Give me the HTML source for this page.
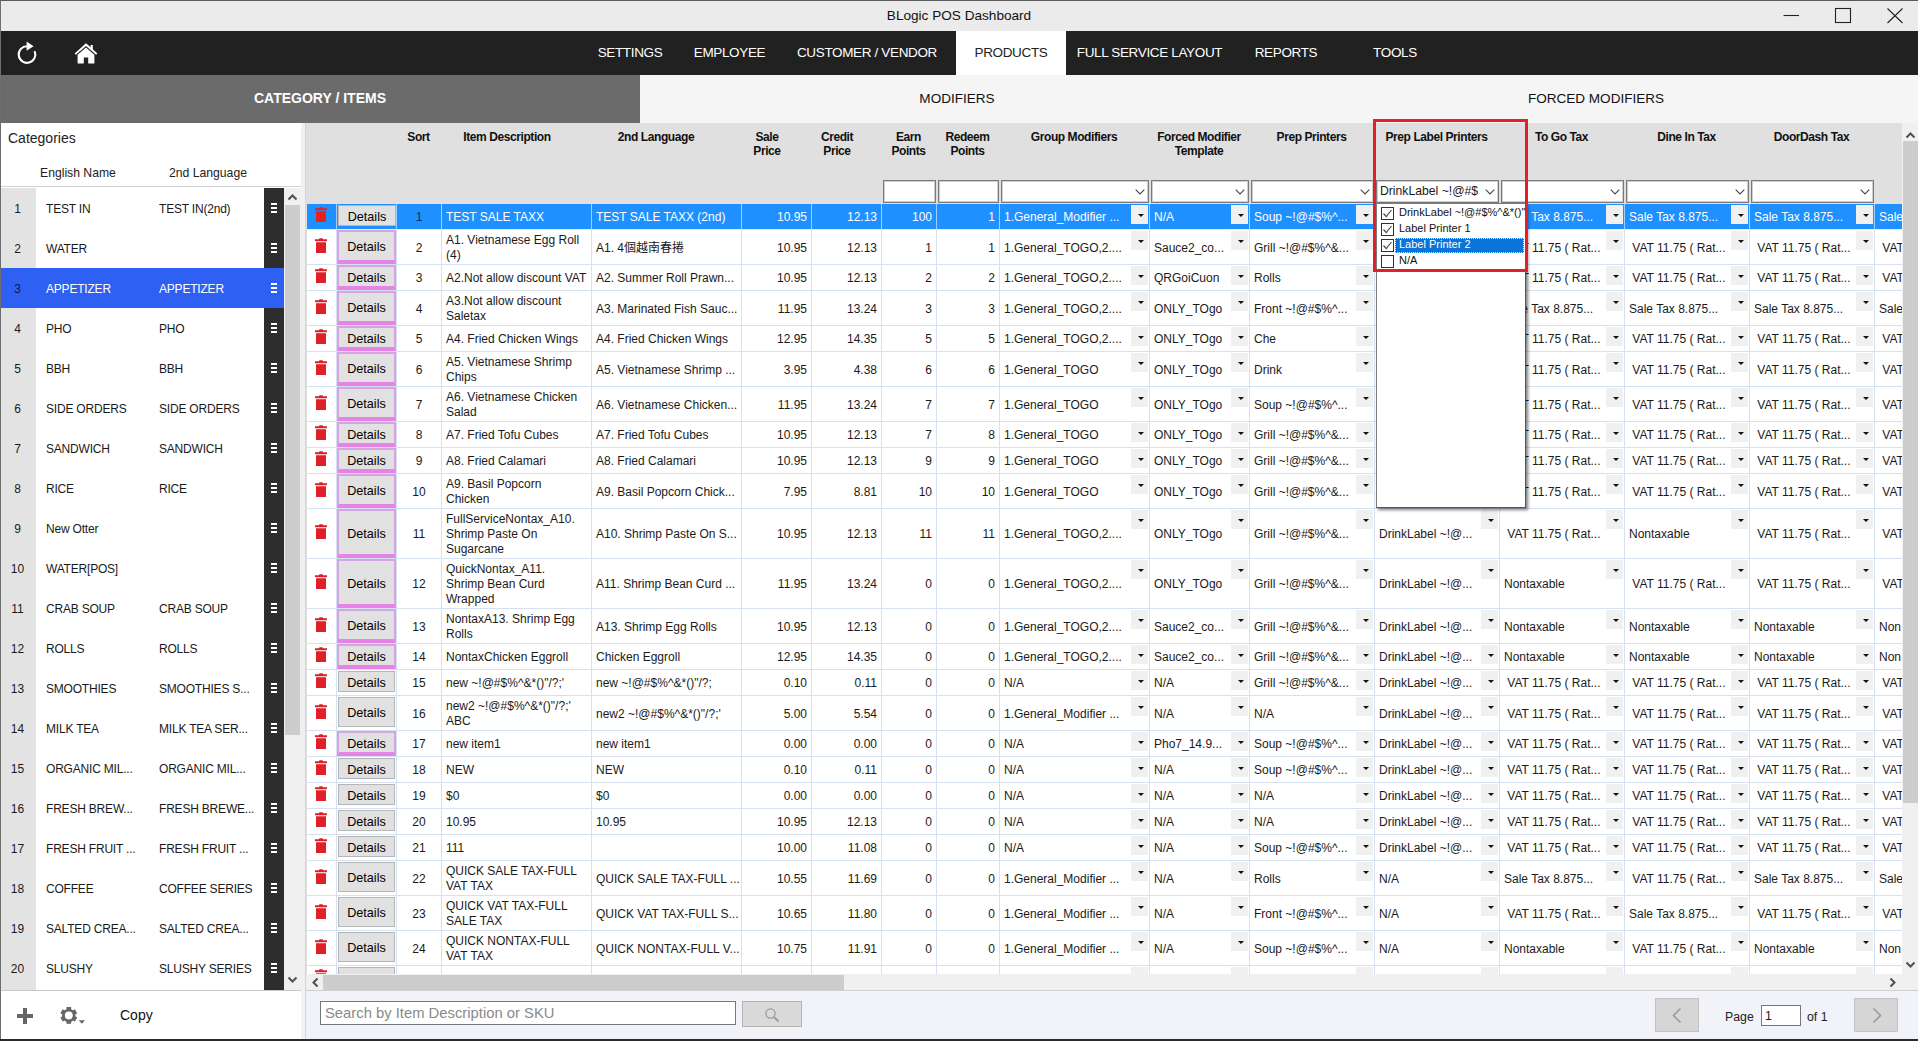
<!DOCTYPE html><html><head><meta charset="utf-8"><title>BLogic POS Dashboard</title><style>
*{box-sizing:border-box;margin:0;padding:0}
html,body{width:1918px;height:1041px;overflow:hidden;background:#f0f0f0;font-family:"Liberation Sans","Noto Sans CJK TC",sans-serif;color:#1a1a1a}
.abs{position:absolute}
#win{position:absolute;left:0;top:0;width:1918px;height:1041px;overflow:hidden;background:#f1f3f9}
#title{left:0;top:0;width:1918px;height:31px;background:#ebebeb;border-top:1px solid #5a5a5a}
#title .t{left:0;width:1918px;top:7px;text-align:center;font-size:13.6px;color:#111}
#nav{left:0;top:31px;width:1918px;height:44px;background:#212121}
#nav .n{top:0;height:44px;line-height:43px;color:#fff;font-size:13.5px;letter-spacing:-0.35px;text-align:center;white-space:nowrap}
#nav .sel{background:#fff;color:#222}
#sub{left:0;top:75px;width:1918px;height:48px;background:#f5f5f5}
#sub .s{top:0;height:48px;line-height:47.5px;text-align:center;font-size:13.55px;color:#111;white-space:nowrap}
#sub .act{background:#6b6b6b;color:#fff;font-weight:bold;font-size:14px}
#left{left:0;top:123px;width:301px;height:916px;background:#fff}
#lsep{left:301px;top:123px;width:4px;height:867px;background:#f0f0f0}
.crow{left:0;width:284px;height:40px;font-size:12px;line-height:42px;white-space:nowrap;color:#1a1a1a}
.crow .num{left:0;top:0;width:36px;height:40px;background:#e3e3e3;text-align:center;padding-right:1px}
.crow .a{left:46px;top:0;letter-spacing:-0.2px}
.crow .b{left:159px;top:0;letter-spacing:-0.2px}
.crow .h{left:264px;top:0;width:20px;height:40px;background:#2d2d2d}
.crow .h i{position:absolute;left:7px;width:6px;height:2px;background:#fff}
.crow.sel{background:#2e60f4;color:#fff}
.crow.sel .num{background:#2e60f4;color:#0b1a55}
.crow.sel .h{background:#2e60f4}
#grid{left:305px;top:123px;width:1598px;height:851px;background:#e0e0e0;overflow:hidden}
.hd{position:absolute;top:7px;text-align:center;font-weight:bold;font-size:12px;line-height:14px;letter-spacing:-0.42px;color:#111;white-space:nowrap}
.fi{position:absolute;top:57px;height:23px;background:#fff;border:1px solid #7a7a7a;box-shadow:0 0 0 1px #cfcfcf inset;font-size:12.2px;line-height:21px;padding-left:3px;white-space:nowrap;overflow:hidden}
.fi svg{position:absolute;right:3px;top:8px}
.row{position:absolute;left:2px;width:1700px;background:#fff;font-size:12px;white-space:nowrap}
.c{position:absolute;top:0;height:100%;border-right:1px solid #d5e0f0;border-bottom:1px solid #d5e0f0;padding:2px 4px 0 4px;overflow:hidden;display:flex;align-items:center;line-height:14.8px}
.c.r{justify-content:flex-end}
.c.m{justify-content:center}
.row.sel{background:#1e90ff;color:#fff}
.row.sel .c{border-right-color:#9fd0ff;border-bottom-color:#e3eefb}
.row.sel .c.m{color:#0a2c66}
.dd{position:absolute;top:1px;right:1px;width:17px;height:19px;background:#f0f0f0}
.dd:after{content:"";position:absolute;left:6.5px;top:8.5px;border-left:3px solid transparent;border-right:3px solid transparent;border-top:3.5px solid #111}
.btn{position:absolute;background:#e1e1e1;border:1px solid #b6b6b6;font-size:12.6px;display:flex;align-items:center;justify-content:center;color:#000;padding-top:3px}
.btn.p{border:2px solid #d6a4e2;border-bottom:4px solid #e683e6}
.btn.p1{border:1px solid #d88ee0}
.tr{position:absolute;left:8px}
</style></head><body><div id="win">
<div id="title" class="abs"><div class="t abs">BLogic POS Dashboard</div>
<svg class="abs" style="left:1780px;top:0" width="130" height="31" viewBox="0 0 130 31"><g stroke="#222" stroke-width="1.1" fill="none"><path d="M3.5 14.5H19"/><rect x="55.5" y="7.5" width="15" height="14"/><path d="M107.5 7.5L122.5 22M122.5 7.5L107.5 22"/></g></svg>
</div>
<div id="nav" class="abs">
<svg class="abs" style="left:14px;top:8px" width="28" height="28" viewBox="0 0 28 28"><path d="M20.6 12.2A8.3 8.3 0 1 1 13.2 7.2" fill="none" stroke="#fff" stroke-width="2.1"/><path d="M12.6 2.6L19.6 7.2L12.6 11.8Z" fill="#fff"/></svg>
<svg class="abs" style="left:72px;top:9px" width="28" height="26" viewBox="0 0 28 26"><path d="M14 3.2L2.6 13.4L3.9 14.8L14 5.9L24.1 14.8L25.4 13.4L20.8 9.3V5H18.6V7.3Z" fill="#fff"/><path d="M14 7.4L5.6 14.8V23.4H11.8V17.4H16.2V23.4H22.4V14.8Z" fill="#fff"/></svg>
<div class="n abs" style="left:578px;width:104px">SETTINGS</div>
<div class="n abs" style="left:674px;width:111px">EMPLOYEE</div>
<div class="n abs" style="left:777px;width:180px">CUSTOMER / VENDOR</div>
<div class="n abs sel" style="left:956px;width:110px">PRODUCTS</div>
<div class="n abs" style="left:1057px;width:185px">FULL SERVICE LAYOUT</div>
<div class="n abs" style="left:1236px;width:100px">REPORTS</div>
<div class="n abs" style="left:1353px;width:84px">TOOLS</div>
</div>
<div id="sub" class="abs">
<div class="s abs act" style="left:0;width:640px">CATEGORY / ITEMS</div>
<div class="s abs" style="left:857px;width:200px">MODIFIERS</div>
<div class="s abs" style="left:1496px;width:200px">FORCED MODIFIERS</div>
</div>
<div id="left" class="abs">
<div class="abs" style="left:8px;top:7px;font-size:14px;color:#222">Categories</div>
<div class="abs" style="left:40px;top:43px;font-size:12.2px;color:#222">English Name</div>
<div class="abs" style="left:169px;top:43px;font-size:12.2px;color:#222">2nd Language</div>
<div class="abs" style="left:0;top:63px;width:301px;height:1px;background:#d0d0d0"></div>
<div class="abs" style="left:0;top:65px;width:36px;height:802px;background:#e3e3e3"></div><div class="abs" style="left:264px;top:65px;width:20px;height:802px;background:#2d2d2d"></div>
<div class="crow abs" style="top:65px"><div class="num abs">1</div><div class="a abs">TEST IN</div><div class="b abs">TEST IN(2nd)</div><div class="h abs"><i style="top:15px"></i><i style="top:19px"></i><i style="top:23px"></i></div></div>
<div class="crow abs" style="top:105px"><div class="num abs">2</div><div class="a abs">WATER</div><div class="b abs"></div><div class="h abs"><i style="top:15px"></i><i style="top:19px"></i><i style="top:23px"></i></div></div>
<div class="crow abs sel" style="top:145px"><div class="num abs">3</div><div class="a abs">APPETIZER</div><div class="b abs">APPETIZER</div><div class="h abs"><i style="top:15px"></i><i style="top:19px"></i><i style="top:23px"></i></div></div>
<div class="crow abs" style="top:185px"><div class="num abs">4</div><div class="a abs">PHO</div><div class="b abs">PHO</div><div class="h abs"><i style="top:15px"></i><i style="top:19px"></i><i style="top:23px"></i></div></div>
<div class="crow abs" style="top:225px"><div class="num abs">5</div><div class="a abs">BBH</div><div class="b abs">BBH</div><div class="h abs"><i style="top:15px"></i><i style="top:19px"></i><i style="top:23px"></i></div></div>
<div class="crow abs" style="top:265px"><div class="num abs">6</div><div class="a abs">SIDE ORDERS</div><div class="b abs">SIDE ORDERS</div><div class="h abs"><i style="top:15px"></i><i style="top:19px"></i><i style="top:23px"></i></div></div>
<div class="crow abs" style="top:305px"><div class="num abs">7</div><div class="a abs">SANDWICH</div><div class="b abs">SANDWICH</div><div class="h abs"><i style="top:15px"></i><i style="top:19px"></i><i style="top:23px"></i></div></div>
<div class="crow abs" style="top:345px"><div class="num abs">8</div><div class="a abs">RICE</div><div class="b abs">RICE</div><div class="h abs"><i style="top:15px"></i><i style="top:19px"></i><i style="top:23px"></i></div></div>
<div class="crow abs" style="top:385px"><div class="num abs">9</div><div class="a abs">New Otter</div><div class="b abs"></div><div class="h abs"><i style="top:15px"></i><i style="top:19px"></i><i style="top:23px"></i></div></div>
<div class="crow abs" style="top:425px"><div class="num abs">10</div><div class="a abs">WATER[POS]</div><div class="b abs"></div><div class="h abs"><i style="top:15px"></i><i style="top:19px"></i><i style="top:23px"></i></div></div>
<div class="crow abs" style="top:465px"><div class="num abs">11</div><div class="a abs">CRAB SOUP</div><div class="b abs">CRAB SOUP</div><div class="h abs"><i style="top:15px"></i><i style="top:19px"></i><i style="top:23px"></i></div></div>
<div class="crow abs" style="top:505px"><div class="num abs">12</div><div class="a abs">ROLLS</div><div class="b abs">ROLLS</div><div class="h abs"><i style="top:15px"></i><i style="top:19px"></i><i style="top:23px"></i></div></div>
<div class="crow abs" style="top:545px"><div class="num abs">13</div><div class="a abs">SMOOTHIES</div><div class="b abs">SMOOTHIES S...</div><div class="h abs"><i style="top:15px"></i><i style="top:19px"></i><i style="top:23px"></i></div></div>
<div class="crow abs" style="top:585px"><div class="num abs">14</div><div class="a abs">MILK TEA</div><div class="b abs">MILK TEA SER...</div><div class="h abs"><i style="top:15px"></i><i style="top:19px"></i><i style="top:23px"></i></div></div>
<div class="crow abs" style="top:625px"><div class="num abs">15</div><div class="a abs">ORGANIC MIL...</div><div class="b abs">ORGANIC MIL...</div><div class="h abs"><i style="top:15px"></i><i style="top:19px"></i><i style="top:23px"></i></div></div>
<div class="crow abs" style="top:665px"><div class="num abs">16</div><div class="a abs">FRESH BREW...</div><div class="b abs">FRESH BREWE...</div><div class="h abs"><i style="top:15px"></i><i style="top:19px"></i><i style="top:23px"></i></div></div>
<div class="crow abs" style="top:705px"><div class="num abs">17</div><div class="a abs">FRESH FRUIT ...</div><div class="b abs">FRESH FRUIT ...</div><div class="h abs"><i style="top:15px"></i><i style="top:19px"></i><i style="top:23px"></i></div></div>
<div class="crow abs" style="top:745px"><div class="num abs">18</div><div class="a abs">COFFEE</div><div class="b abs">COFFEE SERIES</div><div class="h abs"><i style="top:15px"></i><i style="top:19px"></i><i style="top:23px"></i></div></div>
<div class="crow abs" style="top:785px"><div class="num abs">19</div><div class="a abs">SALTED CREA...</div><div class="b abs">SALTED CREA...</div><div class="h abs"><i style="top:15px"></i><i style="top:19px"></i><i style="top:23px"></i></div></div>
<div class="crow abs" style="top:825px"><div class="num abs">20</div><div class="a abs">SLUSHY</div><div class="b abs">SLUSHY SERIES</div><div class="h abs"><i style="top:15px"></i><i style="top:19px"></i><i style="top:23px"></i></div></div>
<div class="abs" style="left:284px;top:65px;width:17px;height:802px;background:#f0f0f0"><svg class="abs" style="left:3px;top:5px" width="11" height="8" viewBox="0 0 11 8"><path d="M1.5 6.5L5.5 2.5L9.5 6.5" fill="none" stroke="#505050" stroke-width="2"/></svg><div class="abs" style="left:1px;top:17px;width:15px;height:530px;background:#cdcdcd"></div><svg class="abs" style="left:3px;top:788px" width="11" height="8" viewBox="0 0 11 8"><path d="M1.5 1.5L5.5 5.5L9.5 1.5" fill="none" stroke="#505050" stroke-width="2"/></svg></div>
<div class="abs" style="left:0;top:867px;width:301px;height:1px;background:#c8c8c8"></div>
<svg class="abs" style="left:16px;top:884px" width="18" height="18" viewBox="0 0 18 18"><path d="M9 1V17M1 9H17" stroke="#666" stroke-width="4" fill="none"/></svg>
<svg class="abs" style="left:58px;top:882px" width="28" height="22" viewBox="0 0 28 22"><g transform="translate(10.8 10.4)"><g fill="#666"><rect x="-2.3" y="-8.4" width="4.6" height="4" transform="rotate(0)"/><rect x="-2.3" y="-8.4" width="4.6" height="4" transform="rotate(60)"/><rect x="-2.3" y="-8.4" width="4.6" height="4" transform="rotate(120)"/><rect x="-2.3" y="-8.4" width="4.6" height="4" transform="rotate(180)"/><rect x="-2.3" y="-8.4" width="4.6" height="4" transform="rotate(240)"/><rect x="-2.3" y="-8.4" width="4.6" height="4" transform="rotate(300)"/></g><circle r="5.35" fill="none" stroke="#666" stroke-width="2.7"/></g><path d="M20.8 15.2H27L23.9 18.8Z" fill="#666"/></svg>
<div class="abs" style="left:120px;top:884px;font-size:14px;color:#111">Copy</div>
</div>
<div id="lsep" class="abs"></div>
<div class="abs" style="left:0;top:0;width:1px;height:1041px;background:#6e6e6e"></div>
<div id="grid" class="abs">
<div class="hd" style="left:91px;width:45px">Sort</div>
<div class="hd" style="left:127px;width:150px">Item Description</div>
<div class="hd" style="left:276px;width:150px">2nd Language</div>
<div class="hd" style="left:427px;width:70px">Sale<br>Price</div>
<div class="hd" style="left:497px;width:70px">Credit<br>Price</div>
<div class="hd" style="left:576px;width:55px">Earn<br>Points</div>
<div class="hd" style="left:631px;width:63px">Redeem<br>Points</div>
<div class="hd" style="left:694px;width:150px">Group Modifiers</div>
<div class="hd" style="left:844px;width:100px">Forced Modifier<br>Template</div>
<div class="hd" style="left:944px;width:125px">Prep Printers</div>
<div class="hd" style="left:1069px;width:125px">Prep Label Printers</div>
<div class="hd" style="left:1194px;width:125px">To Go Tax</div>
<div class="hd" style="left:1319px;width:125px">Dine In Tax</div>
<div class="hd" style="left:1444px;width:125px">DoorDash Tax</div>
<div class="fi" style="left:578px;width:53px"></div>
<div class="fi" style="left:633px;width:61px"></div>
<div class="fi" style="left:696px;width:148px"><svg width="10" height="6" viewBox="0 0 10 6"><path d="M0.7 0.7L5 5L9.3 0.7" fill="none" stroke="#444" stroke-width="1.1"/></svg></div>
<div class="fi" style="left:846px;width:98px"><svg width="10" height="6" viewBox="0 0 10 6"><path d="M0.7 0.7L5 5L9.3 0.7" fill="none" stroke="#444" stroke-width="1.1"/></svg></div>
<div class="fi" style="left:946px;width:123px"><svg width="10" height="6" viewBox="0 0 10 6"><path d="M0.7 0.7L5 5L9.3 0.7" fill="none" stroke="#444" stroke-width="1.1"/></svg></div>
<div class="fi" style="left:1071px;width:123px">DrinkLabel ~!@#$<svg width="10" height="6" viewBox="0 0 10 6"><path d="M0.7 0.7L5 5L9.3 0.7" fill="none" stroke="#444" stroke-width="1.1"/></svg></div>
<div class="fi" style="left:1196px;width:123px"><svg width="10" height="6" viewBox="0 0 10 6"><path d="M0.7 0.7L5 5L9.3 0.7" fill="none" stroke="#444" stroke-width="1.1"/></svg></div>
<div class="fi" style="left:1321px;width:123px"><svg width="10" height="6" viewBox="0 0 10 6"><path d="M0.7 0.7L5 5L9.3 0.7" fill="none" stroke="#444" stroke-width="1.1"/></svg></div>
<div class="fi" style="left:1446px;width:123px"><svg width="10" height="6" viewBox="0 0 10 6"><path d="M0.7 0.7L5 5L9.3 0.7" fill="none" stroke="#444" stroke-width="1.1"/></svg></div>
<div class="row sel" style="top:81px;height:26px">
<div class="c " style="left:0px;width:30px;padding:0"><svg class="tr" style="top:3.0px" width="12" height="15" viewBox="0 0 12 15"><path d="M0 1.3H3.8L4.6 0.2H7.4L8.2 1.3H12V3.3H0Z M1 4.2H11V15H1Z" fill="#e8211c"/></svg></div>
<div class="c " style="left:30px;width:60px;padding:0"><div class="btn" style="left:1px;top:1px;width:58px;height:21px">Details</div></div>
<div class="c m" style="left:90px;width:45px;">1</div>
<div class="c " style="left:135px;width:150px;"><span>TEST SALE TAXX</span></div>
<div class="c " style="left:285px;width:150px;">TEST SALE TAXX (2nd)</div>
<div class="c r" style="left:435px;width:70px;">10.95</div>
<div class="c r" style="left:505px;width:70px;">12.13</div>
<div class="c r" style="left:575px;width:55px;">100</div>
<div class="c r" style="left:630px;width:63px;">1</div>
<div class="c " style="left:693px;width:150px;">1.General_Modifier ...<div class="dd"></div></div>
<div class="c " style="left:843px;width:100px;">N/A<div class="dd"></div></div>
<div class="c " style="left:943px;width:125px;">Soup ~!@#$%^...<div class="dd"></div></div>
<div class="c " style="left:1068px;width:125px;">DrinkLabel ~!@...<div class="dd"></div></div>
<div class="c " style="left:1193px;width:125px;">Sale Tax 8.875...<div class="dd"></div></div>
<div class="c " style="left:1318px;width:125px;">Sale Tax 8.875...<div class="dd"></div></div>
<div class="c " style="left:1443px;width:125px;">Sale Tax 8.875...<div class="dd"></div></div>
<div class="c " style="left:1568px;width:125px;">Sale<div class="dd"></div></div>
</div>
<div class="row" style="top:107px;height:35px">
<div class="c " style="left:0px;width:30px;padding:0"><svg class="tr" style="top:7.5px" width="12" height="15" viewBox="0 0 12 15"><path d="M0 1.3H3.8L4.6 0.2H7.4L8.2 1.3H12V3.3H0Z M1 4.2H11V15H1Z" fill="#de2128"/></svg></div>
<div class="c " style="left:30px;width:60px;padding:0"><div class="btn p" style="left:0;top:0;width:59px;height:34px">Details</div></div>
<div class="c m" style="left:90px;width:45px;">2</div>
<div class="c " style="left:135px;width:150px;"><span>A1. Vietnamese Egg Roll<br>(4)</span></div>
<div class="c " style="left:285px;width:150px;">A1. 4個越南春捲</div>
<div class="c r" style="left:435px;width:70px;">10.95</div>
<div class="c r" style="left:505px;width:70px;">12.13</div>
<div class="c r" style="left:575px;width:55px;">1</div>
<div class="c r" style="left:630px;width:63px;">1</div>
<div class="c " style="left:693px;width:150px;">1.General_TOGO,2....<div class="dd"></div></div>
<div class="c " style="left:843px;width:100px;">Sauce2_co...<div class="dd"></div></div>
<div class="c " style="left:943px;width:125px;">Grill ~!@#$%^&amp;...<div class="dd"></div></div>
<div class="c " style="left:1068px;width:125px;">DrinkLabel ~!@...<div class="dd"></div></div>
<div class="c " style="left:1193px;width:125px;">&nbsp;VAT 11.75 ( Rat...<div class="dd"></div></div>
<div class="c " style="left:1318px;width:125px;">&nbsp;VAT 11.75 ( Rat...<div class="dd"></div></div>
<div class="c " style="left:1443px;width:125px;">&nbsp;VAT 11.75 ( Rat...<div class="dd"></div></div>
<div class="c " style="left:1568px;width:125px;">&nbsp;VAT<div class="dd"></div></div>
</div>
<div class="row" style="top:142px;height:26px">
<div class="c " style="left:0px;width:30px;padding:0"><svg class="tr" style="top:3.0px" width="12" height="15" viewBox="0 0 12 15"><path d="M0 1.3H3.8L4.6 0.2H7.4L8.2 1.3H12V3.3H0Z M1 4.2H11V15H1Z" fill="#de2128"/></svg></div>
<div class="c " style="left:30px;width:60px;padding:0"><div class="btn p" style="left:0;top:0;width:59px;height:25px">Details</div></div>
<div class="c m" style="left:90px;width:45px;">3</div>
<div class="c " style="left:135px;width:150px;"><span>A2.Not allow discount VAT</span></div>
<div class="c " style="left:285px;width:150px;">A2. Summer Roll Prawn...</div>
<div class="c r" style="left:435px;width:70px;">10.95</div>
<div class="c r" style="left:505px;width:70px;">12.13</div>
<div class="c r" style="left:575px;width:55px;">2</div>
<div class="c r" style="left:630px;width:63px;">2</div>
<div class="c " style="left:693px;width:150px;">1.General_TOGO,2....<div class="dd"></div></div>
<div class="c " style="left:843px;width:100px;">QRGoiCuon<div class="dd"></div></div>
<div class="c " style="left:943px;width:125px;">Rolls<div class="dd"></div></div>
<div class="c " style="left:1068px;width:125px;">DrinkLabel ~!@...<div class="dd"></div></div>
<div class="c " style="left:1193px;width:125px;">&nbsp;VAT 11.75 ( Rat...<div class="dd"></div></div>
<div class="c " style="left:1318px;width:125px;">&nbsp;VAT 11.75 ( Rat...<div class="dd"></div></div>
<div class="c " style="left:1443px;width:125px;">&nbsp;VAT 11.75 ( Rat...<div class="dd"></div></div>
<div class="c " style="left:1568px;width:125px;">&nbsp;VAT<div class="dd"></div></div>
</div>
<div class="row" style="top:168px;height:35px">
<div class="c " style="left:0px;width:30px;padding:0"><svg class="tr" style="top:7.5px" width="12" height="15" viewBox="0 0 12 15"><path d="M0 1.3H3.8L4.6 0.2H7.4L8.2 1.3H12V3.3H0Z M1 4.2H11V15H1Z" fill="#de2128"/></svg></div>
<div class="c " style="left:30px;width:60px;padding:0"><div class="btn p" style="left:0;top:0;width:59px;height:34px">Details</div></div>
<div class="c m" style="left:90px;width:45px;">4</div>
<div class="c " style="left:135px;width:150px;"><span>A3.Not allow discount<br>Saletax</span></div>
<div class="c " style="left:285px;width:150px;">A3. Marinated Fish Sauc...</div>
<div class="c r" style="left:435px;width:70px;">11.95</div>
<div class="c r" style="left:505px;width:70px;">13.24</div>
<div class="c r" style="left:575px;width:55px;">3</div>
<div class="c r" style="left:630px;width:63px;">3</div>
<div class="c " style="left:693px;width:150px;">1.General_TOGO,2....<div class="dd"></div></div>
<div class="c " style="left:843px;width:100px;">ONLY_TOgo<div class="dd"></div></div>
<div class="c " style="left:943px;width:125px;">Front ~!@#$%^...<div class="dd"></div></div>
<div class="c " style="left:1068px;width:125px;">DrinkLabel ~!@...<div class="dd"></div></div>
<div class="c " style="left:1193px;width:125px;">Sale Tax 8.875...<div class="dd"></div></div>
<div class="c " style="left:1318px;width:125px;">Sale Tax 8.875...<div class="dd"></div></div>
<div class="c " style="left:1443px;width:125px;">Sale Tax 8.875...<div class="dd"></div></div>
<div class="c " style="left:1568px;width:125px;">Sale<div class="dd"></div></div>
</div>
<div class="row" style="top:203px;height:26px">
<div class="c " style="left:0px;width:30px;padding:0"><svg class="tr" style="top:3.0px" width="12" height="15" viewBox="0 0 12 15"><path d="M0 1.3H3.8L4.6 0.2H7.4L8.2 1.3H12V3.3H0Z M1 4.2H11V15H1Z" fill="#de2128"/></svg></div>
<div class="c " style="left:30px;width:60px;padding:0"><div class="btn p" style="left:0;top:0;width:59px;height:25px">Details</div></div>
<div class="c m" style="left:90px;width:45px;">5</div>
<div class="c " style="left:135px;width:150px;"><span>A4. Fried Chicken Wings</span></div>
<div class="c " style="left:285px;width:150px;">A4. Fried Chicken Wings</div>
<div class="c r" style="left:435px;width:70px;">12.95</div>
<div class="c r" style="left:505px;width:70px;">14.35</div>
<div class="c r" style="left:575px;width:55px;">5</div>
<div class="c r" style="left:630px;width:63px;">5</div>
<div class="c " style="left:693px;width:150px;">1.General_TOGO,2....<div class="dd"></div></div>
<div class="c " style="left:843px;width:100px;">ONLY_TOgo<div class="dd"></div></div>
<div class="c " style="left:943px;width:125px;">Che<div class="dd"></div></div>
<div class="c " style="left:1068px;width:125px;">DrinkLabel ~!@...<div class="dd"></div></div>
<div class="c " style="left:1193px;width:125px;">&nbsp;VAT 11.75 ( Rat...<div class="dd"></div></div>
<div class="c " style="left:1318px;width:125px;">&nbsp;VAT 11.75 ( Rat...<div class="dd"></div></div>
<div class="c " style="left:1443px;width:125px;">&nbsp;VAT 11.75 ( Rat...<div class="dd"></div></div>
<div class="c " style="left:1568px;width:125px;">&nbsp;VAT<div class="dd"></div></div>
</div>
<div class="row" style="top:229px;height:35px">
<div class="c " style="left:0px;width:30px;padding:0"><svg class="tr" style="top:7.5px" width="12" height="15" viewBox="0 0 12 15"><path d="M0 1.3H3.8L4.6 0.2H7.4L8.2 1.3H12V3.3H0Z M1 4.2H11V15H1Z" fill="#de2128"/></svg></div>
<div class="c " style="left:30px;width:60px;padding:0"><div class="btn p" style="left:0;top:0;width:59px;height:34px">Details</div></div>
<div class="c m" style="left:90px;width:45px;">6</div>
<div class="c " style="left:135px;width:150px;"><span>A5. Vietnamese Shrimp<br>Chips</span></div>
<div class="c " style="left:285px;width:150px;">A5. Vietnamese Shrimp ...</div>
<div class="c r" style="left:435px;width:70px;">3.95</div>
<div class="c r" style="left:505px;width:70px;">4.38</div>
<div class="c r" style="left:575px;width:55px;">6</div>
<div class="c r" style="left:630px;width:63px;">6</div>
<div class="c " style="left:693px;width:150px;">1.General_TOGO<div class="dd"></div></div>
<div class="c " style="left:843px;width:100px;">ONLY_TOgo<div class="dd"></div></div>
<div class="c " style="left:943px;width:125px;">Drink<div class="dd"></div></div>
<div class="c " style="left:1068px;width:125px;">DrinkLabel ~!@...<div class="dd"></div></div>
<div class="c " style="left:1193px;width:125px;">&nbsp;VAT 11.75 ( Rat...<div class="dd"></div></div>
<div class="c " style="left:1318px;width:125px;">&nbsp;VAT 11.75 ( Rat...<div class="dd"></div></div>
<div class="c " style="left:1443px;width:125px;">&nbsp;VAT 11.75 ( Rat...<div class="dd"></div></div>
<div class="c " style="left:1568px;width:125px;">&nbsp;VAT<div class="dd"></div></div>
</div>
<div class="row" style="top:264px;height:35px">
<div class="c " style="left:0px;width:30px;padding:0"><svg class="tr" style="top:7.5px" width="12" height="15" viewBox="0 0 12 15"><path d="M0 1.3H3.8L4.6 0.2H7.4L8.2 1.3H12V3.3H0Z M1 4.2H11V15H1Z" fill="#de2128"/></svg></div>
<div class="c " style="left:30px;width:60px;padding:0"><div class="btn p" style="left:0;top:0;width:59px;height:34px">Details</div></div>
<div class="c m" style="left:90px;width:45px;">7</div>
<div class="c " style="left:135px;width:150px;"><span>A6. Vietnamese Chicken<br>Salad</span></div>
<div class="c " style="left:285px;width:150px;">A6. Vietnamese Chicken...</div>
<div class="c r" style="left:435px;width:70px;">11.95</div>
<div class="c r" style="left:505px;width:70px;">13.24</div>
<div class="c r" style="left:575px;width:55px;">7</div>
<div class="c r" style="left:630px;width:63px;">7</div>
<div class="c " style="left:693px;width:150px;">1.General_TOGO<div class="dd"></div></div>
<div class="c " style="left:843px;width:100px;">ONLY_TOgo<div class="dd"></div></div>
<div class="c " style="left:943px;width:125px;">Soup ~!@#$%^...<div class="dd"></div></div>
<div class="c " style="left:1068px;width:125px;">DrinkLabel ~!@...<div class="dd"></div></div>
<div class="c " style="left:1193px;width:125px;">&nbsp;VAT 11.75 ( Rat...<div class="dd"></div></div>
<div class="c " style="left:1318px;width:125px;">&nbsp;VAT 11.75 ( Rat...<div class="dd"></div></div>
<div class="c " style="left:1443px;width:125px;">&nbsp;VAT 11.75 ( Rat...<div class="dd"></div></div>
<div class="c " style="left:1568px;width:125px;">&nbsp;VAT<div class="dd"></div></div>
</div>
<div class="row" style="top:299px;height:26px">
<div class="c " style="left:0px;width:30px;padding:0"><svg class="tr" style="top:3.0px" width="12" height="15" viewBox="0 0 12 15"><path d="M0 1.3H3.8L4.6 0.2H7.4L8.2 1.3H12V3.3H0Z M1 4.2H11V15H1Z" fill="#de2128"/></svg></div>
<div class="c " style="left:30px;width:60px;padding:0"><div class="btn p" style="left:0;top:0;width:59px;height:25px">Details</div></div>
<div class="c m" style="left:90px;width:45px;">8</div>
<div class="c " style="left:135px;width:150px;"><span>A7. Fried Tofu Cubes</span></div>
<div class="c " style="left:285px;width:150px;">A7. Fried Tofu Cubes</div>
<div class="c r" style="left:435px;width:70px;">10.95</div>
<div class="c r" style="left:505px;width:70px;">12.13</div>
<div class="c r" style="left:575px;width:55px;">7</div>
<div class="c r" style="left:630px;width:63px;">8</div>
<div class="c " style="left:693px;width:150px;">1.General_TOGO<div class="dd"></div></div>
<div class="c " style="left:843px;width:100px;">ONLY_TOgo<div class="dd"></div></div>
<div class="c " style="left:943px;width:125px;">Grill ~!@#$%^&amp;...<div class="dd"></div></div>
<div class="c " style="left:1068px;width:125px;">DrinkLabel ~!@...<div class="dd"></div></div>
<div class="c " style="left:1193px;width:125px;">&nbsp;VAT 11.75 ( Rat...<div class="dd"></div></div>
<div class="c " style="left:1318px;width:125px;">&nbsp;VAT 11.75 ( Rat...<div class="dd"></div></div>
<div class="c " style="left:1443px;width:125px;">&nbsp;VAT 11.75 ( Rat...<div class="dd"></div></div>
<div class="c " style="left:1568px;width:125px;">&nbsp;VAT<div class="dd"></div></div>
</div>
<div class="row" style="top:325px;height:26px">
<div class="c " style="left:0px;width:30px;padding:0"><svg class="tr" style="top:3.0px" width="12" height="15" viewBox="0 0 12 15"><path d="M0 1.3H3.8L4.6 0.2H7.4L8.2 1.3H12V3.3H0Z M1 4.2H11V15H1Z" fill="#de2128"/></svg></div>
<div class="c " style="left:30px;width:60px;padding:0"><div class="btn p" style="left:0;top:0;width:59px;height:25px">Details</div></div>
<div class="c m" style="left:90px;width:45px;">9</div>
<div class="c " style="left:135px;width:150px;"><span>A8. Fried Calamari</span></div>
<div class="c " style="left:285px;width:150px;">A8. Fried Calamari</div>
<div class="c r" style="left:435px;width:70px;">10.95</div>
<div class="c r" style="left:505px;width:70px;">12.13</div>
<div class="c r" style="left:575px;width:55px;">9</div>
<div class="c r" style="left:630px;width:63px;">9</div>
<div class="c " style="left:693px;width:150px;">1.General_TOGO<div class="dd"></div></div>
<div class="c " style="left:843px;width:100px;">ONLY_TOgo<div class="dd"></div></div>
<div class="c " style="left:943px;width:125px;">Grill ~!@#$%^&amp;...<div class="dd"></div></div>
<div class="c " style="left:1068px;width:125px;">DrinkLabel ~!@...<div class="dd"></div></div>
<div class="c " style="left:1193px;width:125px;">&nbsp;VAT 11.75 ( Rat...<div class="dd"></div></div>
<div class="c " style="left:1318px;width:125px;">&nbsp;VAT 11.75 ( Rat...<div class="dd"></div></div>
<div class="c " style="left:1443px;width:125px;">&nbsp;VAT 11.75 ( Rat...<div class="dd"></div></div>
<div class="c " style="left:1568px;width:125px;">&nbsp;VAT<div class="dd"></div></div>
</div>
<div class="row" style="top:351px;height:35px">
<div class="c " style="left:0px;width:30px;padding:0"><svg class="tr" style="top:7.5px" width="12" height="15" viewBox="0 0 12 15"><path d="M0 1.3H3.8L4.6 0.2H7.4L8.2 1.3H12V3.3H0Z M1 4.2H11V15H1Z" fill="#de2128"/></svg></div>
<div class="c " style="left:30px;width:60px;padding:0"><div class="btn p" style="left:0;top:0;width:59px;height:34px">Details</div></div>
<div class="c m" style="left:90px;width:45px;">10</div>
<div class="c " style="left:135px;width:150px;"><span>A9. Basil Popcorn<br>Chicken</span></div>
<div class="c " style="left:285px;width:150px;">A9. Basil Popcorn Chick...</div>
<div class="c r" style="left:435px;width:70px;">7.95</div>
<div class="c r" style="left:505px;width:70px;">8.81</div>
<div class="c r" style="left:575px;width:55px;">10</div>
<div class="c r" style="left:630px;width:63px;">10</div>
<div class="c " style="left:693px;width:150px;">1.General_TOGO<div class="dd"></div></div>
<div class="c " style="left:843px;width:100px;">ONLY_TOgo<div class="dd"></div></div>
<div class="c " style="left:943px;width:125px;">Grill ~!@#$%^&amp;...<div class="dd"></div></div>
<div class="c " style="left:1068px;width:125px;">DrinkLabel ~!@...<div class="dd"></div></div>
<div class="c " style="left:1193px;width:125px;">&nbsp;VAT 11.75 ( Rat...<div class="dd"></div></div>
<div class="c " style="left:1318px;width:125px;">&nbsp;VAT 11.75 ( Rat...<div class="dd"></div></div>
<div class="c " style="left:1443px;width:125px;">&nbsp;VAT 11.75 ( Rat...<div class="dd"></div></div>
<div class="c " style="left:1568px;width:125px;">&nbsp;VAT<div class="dd"></div></div>
</div>
<div class="row" style="top:386px;height:50px">
<div class="c " style="left:0px;width:30px;padding:0"><svg class="tr" style="top:15.0px" width="12" height="15" viewBox="0 0 12 15"><path d="M0 1.3H3.8L4.6 0.2H7.4L8.2 1.3H12V3.3H0Z M1 4.2H11V15H1Z" fill="#de2128"/></svg></div>
<div class="c " style="left:30px;width:60px;padding:0"><div class="btn p" style="left:0;top:0;width:59px;height:49px">Details</div></div>
<div class="c m" style="left:90px;width:45px;">11</div>
<div class="c " style="left:135px;width:150px;"><span>FullServiceNontax_A10.<br>Shrimp Paste On<br>Sugarcane</span></div>
<div class="c " style="left:285px;width:150px;">A10. Shrimp Paste On S...</div>
<div class="c r" style="left:435px;width:70px;">10.95</div>
<div class="c r" style="left:505px;width:70px;">12.13</div>
<div class="c r" style="left:575px;width:55px;">11</div>
<div class="c r" style="left:630px;width:63px;">11</div>
<div class="c " style="left:693px;width:150px;">1.General_TOGO,2....<div class="dd"></div></div>
<div class="c " style="left:843px;width:100px;">ONLY_TOgo<div class="dd"></div></div>
<div class="c " style="left:943px;width:125px;">Grill ~!@#$%^&amp;...<div class="dd"></div></div>
<div class="c " style="left:1068px;width:125px;">DrinkLabel ~!@...<div class="dd"></div></div>
<div class="c " style="left:1193px;width:125px;">&nbsp;VAT 11.75 ( Rat...<div class="dd"></div></div>
<div class="c " style="left:1318px;width:125px;">Nontaxable<div class="dd"></div></div>
<div class="c " style="left:1443px;width:125px;">&nbsp;VAT 11.75 ( Rat...<div class="dd"></div></div>
<div class="c " style="left:1568px;width:125px;">&nbsp;VAT<div class="dd"></div></div>
</div>
<div class="row" style="top:436px;height:50px">
<div class="c " style="left:0px;width:30px;padding:0"><svg class="tr" style="top:15.0px" width="12" height="15" viewBox="0 0 12 15"><path d="M0 1.3H3.8L4.6 0.2H7.4L8.2 1.3H12V3.3H0Z M1 4.2H11V15H1Z" fill="#de2128"/></svg></div>
<div class="c " style="left:30px;width:60px;padding:0"><div class="btn p" style="left:0;top:0;width:59px;height:49px">Details</div></div>
<div class="c m" style="left:90px;width:45px;">12</div>
<div class="c " style="left:135px;width:150px;"><span>QuickNontax_A11.<br>Shrimp Bean Curd<br>Wrapped</span></div>
<div class="c " style="left:285px;width:150px;">A11. Shrimp Bean Curd ...</div>
<div class="c r" style="left:435px;width:70px;">11.95</div>
<div class="c r" style="left:505px;width:70px;">13.24</div>
<div class="c r" style="left:575px;width:55px;">0</div>
<div class="c r" style="left:630px;width:63px;">0</div>
<div class="c " style="left:693px;width:150px;">1.General_TOGO,2....<div class="dd"></div></div>
<div class="c " style="left:843px;width:100px;">ONLY_TOgo<div class="dd"></div></div>
<div class="c " style="left:943px;width:125px;">Grill ~!@#$%^&amp;...<div class="dd"></div></div>
<div class="c " style="left:1068px;width:125px;">DrinkLabel ~!@...<div class="dd"></div></div>
<div class="c " style="left:1193px;width:125px;">Nontaxable<div class="dd"></div></div>
<div class="c " style="left:1318px;width:125px;">&nbsp;VAT 11.75 ( Rat...<div class="dd"></div></div>
<div class="c " style="left:1443px;width:125px;">&nbsp;VAT 11.75 ( Rat...<div class="dd"></div></div>
<div class="c " style="left:1568px;width:125px;">&nbsp;VAT<div class="dd"></div></div>
</div>
<div class="row" style="top:486px;height:35px">
<div class="c " style="left:0px;width:30px;padding:0"><svg class="tr" style="top:7.5px" width="12" height="15" viewBox="0 0 12 15"><path d="M0 1.3H3.8L4.6 0.2H7.4L8.2 1.3H12V3.3H0Z M1 4.2H11V15H1Z" fill="#de2128"/></svg></div>
<div class="c " style="left:30px;width:60px;padding:0"><div class="btn p" style="left:0;top:0;width:59px;height:34px">Details</div></div>
<div class="c m" style="left:90px;width:45px;">13</div>
<div class="c " style="left:135px;width:150px;"><span>NontaxA13. Shrimp Egg<br>Rolls</span></div>
<div class="c " style="left:285px;width:150px;">A13. Shrimp Egg Rolls</div>
<div class="c r" style="left:435px;width:70px;">10.95</div>
<div class="c r" style="left:505px;width:70px;">12.13</div>
<div class="c r" style="left:575px;width:55px;">0</div>
<div class="c r" style="left:630px;width:63px;">0</div>
<div class="c " style="left:693px;width:150px;">1.General_TOGO,2....<div class="dd"></div></div>
<div class="c " style="left:843px;width:100px;">Sauce2_co...<div class="dd"></div></div>
<div class="c " style="left:943px;width:125px;">Grill ~!@#$%^&amp;...<div class="dd"></div></div>
<div class="c " style="left:1068px;width:125px;">DrinkLabel ~!@...<div class="dd"></div></div>
<div class="c " style="left:1193px;width:125px;">Nontaxable<div class="dd"></div></div>
<div class="c " style="left:1318px;width:125px;">Nontaxable<div class="dd"></div></div>
<div class="c " style="left:1443px;width:125px;">Nontaxable<div class="dd"></div></div>
<div class="c " style="left:1568px;width:125px;">Non<div class="dd"></div></div>
</div>
<div class="row" style="top:521px;height:26px">
<div class="c " style="left:0px;width:30px;padding:0"><svg class="tr" style="top:3.0px" width="12" height="15" viewBox="0 0 12 15"><path d="M0 1.3H3.8L4.6 0.2H7.4L8.2 1.3H12V3.3H0Z M1 4.2H11V15H1Z" fill="#de2128"/></svg></div>
<div class="c " style="left:30px;width:60px;padding:0"><div class="btn p" style="left:0;top:0;width:59px;height:25px">Details</div></div>
<div class="c m" style="left:90px;width:45px;">14</div>
<div class="c " style="left:135px;width:150px;"><span>NontaxChicken Eggroll</span></div>
<div class="c " style="left:285px;width:150px;">Chicken Eggroll</div>
<div class="c r" style="left:435px;width:70px;">12.95</div>
<div class="c r" style="left:505px;width:70px;">14.35</div>
<div class="c r" style="left:575px;width:55px;">0</div>
<div class="c r" style="left:630px;width:63px;">0</div>
<div class="c " style="left:693px;width:150px;">1.General_TOGO,2....<div class="dd"></div></div>
<div class="c " style="left:843px;width:100px;">Sauce2_co...<div class="dd"></div></div>
<div class="c " style="left:943px;width:125px;">Grill ~!@#$%^&amp;...<div class="dd"></div></div>
<div class="c " style="left:1068px;width:125px;">DrinkLabel ~!@...<div class="dd"></div></div>
<div class="c " style="left:1193px;width:125px;">Nontaxable<div class="dd"></div></div>
<div class="c " style="left:1318px;width:125px;">Nontaxable<div class="dd"></div></div>
<div class="c " style="left:1443px;width:125px;">Nontaxable<div class="dd"></div></div>
<div class="c " style="left:1568px;width:125px;">Non<div class="dd"></div></div>
</div>
<div class="row" style="top:547px;height:26px">
<div class="c " style="left:0px;width:30px;padding:0"><svg class="tr" style="top:3.0px" width="12" height="15" viewBox="0 0 12 15"><path d="M0 1.3H3.8L4.6 0.2H7.4L8.2 1.3H12V3.3H0Z M1 4.2H11V15H1Z" fill="#de2128"/></svg></div>
<div class="c " style="left:30px;width:60px;padding:0"><div class="btn" style="left:1px;top:1px;width:57px;height:21px">Details</div></div>
<div class="c m" style="left:90px;width:45px;">15</div>
<div class="c " style="left:135px;width:150px;"><span>new ~!@#$%^&amp;*()"/?;'</span></div>
<div class="c " style="left:285px;width:150px;">new ~!@#$%^&amp;*()"/?;</div>
<div class="c r" style="left:435px;width:70px;">0.10</div>
<div class="c r" style="left:505px;width:70px;">0.11</div>
<div class="c r" style="left:575px;width:55px;">0</div>
<div class="c r" style="left:630px;width:63px;">0</div>
<div class="c " style="left:693px;width:150px;">N/A<div class="dd"></div></div>
<div class="c " style="left:843px;width:100px;">N/A<div class="dd"></div></div>
<div class="c " style="left:943px;width:125px;">Grill ~!@#$%^&amp;...<div class="dd"></div></div>
<div class="c " style="left:1068px;width:125px;">DrinkLabel ~!@...<div class="dd"></div></div>
<div class="c " style="left:1193px;width:125px;">&nbsp;VAT 11.75 ( Rat...<div class="dd"></div></div>
<div class="c " style="left:1318px;width:125px;">&nbsp;VAT 11.75 ( Rat...<div class="dd"></div></div>
<div class="c " style="left:1443px;width:125px;">&nbsp;VAT 11.75 ( Rat...<div class="dd"></div></div>
<div class="c " style="left:1568px;width:125px;">&nbsp;VAT<div class="dd"></div></div>
</div>
<div class="row" style="top:573px;height:35px">
<div class="c " style="left:0px;width:30px;padding:0"><svg class="tr" style="top:7.5px" width="12" height="15" viewBox="0 0 12 15"><path d="M0 1.3H3.8L4.6 0.2H7.4L8.2 1.3H12V3.3H0Z M1 4.2H11V15H1Z" fill="#de2128"/></svg></div>
<div class="c " style="left:30px;width:60px;padding:0"><div class="btn" style="left:1px;top:1px;width:57px;height:30px">Details</div></div>
<div class="c m" style="left:90px;width:45px;">16</div>
<div class="c " style="left:135px;width:150px;"><span>new2 ~!@#$%^&amp;*()"/?;'<br>ABC</span></div>
<div class="c " style="left:285px;width:150px;">new2 ~!@#$%^&amp;*()"/?;'</div>
<div class="c r" style="left:435px;width:70px;">5.00</div>
<div class="c r" style="left:505px;width:70px;">5.54</div>
<div class="c r" style="left:575px;width:55px;">0</div>
<div class="c r" style="left:630px;width:63px;">0</div>
<div class="c " style="left:693px;width:150px;">1.General_Modifier ...<div class="dd"></div></div>
<div class="c " style="left:843px;width:100px;">N/A<div class="dd"></div></div>
<div class="c " style="left:943px;width:125px;">N/A<div class="dd"></div></div>
<div class="c " style="left:1068px;width:125px;">DrinkLabel ~!@...<div class="dd"></div></div>
<div class="c " style="left:1193px;width:125px;">&nbsp;VAT 11.75 ( Rat...<div class="dd"></div></div>
<div class="c " style="left:1318px;width:125px;">&nbsp;VAT 11.75 ( Rat...<div class="dd"></div></div>
<div class="c " style="left:1443px;width:125px;">&nbsp;VAT 11.75 ( Rat...<div class="dd"></div></div>
<div class="c " style="left:1568px;width:125px;">&nbsp;VAT<div class="dd"></div></div>
</div>
<div class="row" style="top:608px;height:26px">
<div class="c " style="left:0px;width:30px;padding:0"><svg class="tr" style="top:3.0px" width="12" height="15" viewBox="0 0 12 15"><path d="M0 1.3H3.8L4.6 0.2H7.4L8.2 1.3H12V3.3H0Z M1 4.2H11V15H1Z" fill="#de2128"/></svg></div>
<div class="c " style="left:30px;width:60px;padding:0"><div class="btn p" style="left:0;top:0;width:59px;height:25px">Details</div></div>
<div class="c m" style="left:90px;width:45px;">17</div>
<div class="c " style="left:135px;width:150px;"><span>new item1</span></div>
<div class="c " style="left:285px;width:150px;">new item1</div>
<div class="c r" style="left:435px;width:70px;">0.00</div>
<div class="c r" style="left:505px;width:70px;">0.00</div>
<div class="c r" style="left:575px;width:55px;">0</div>
<div class="c r" style="left:630px;width:63px;">0</div>
<div class="c " style="left:693px;width:150px;">N/A<div class="dd"></div></div>
<div class="c " style="left:843px;width:100px;">Pho7_14.9...<div class="dd"></div></div>
<div class="c " style="left:943px;width:125px;">Soup ~!@#$%^...<div class="dd"></div></div>
<div class="c " style="left:1068px;width:125px;">DrinkLabel ~!@...<div class="dd"></div></div>
<div class="c " style="left:1193px;width:125px;">&nbsp;VAT 11.75 ( Rat...<div class="dd"></div></div>
<div class="c " style="left:1318px;width:125px;">&nbsp;VAT 11.75 ( Rat...<div class="dd"></div></div>
<div class="c " style="left:1443px;width:125px;">&nbsp;VAT 11.75 ( Rat...<div class="dd"></div></div>
<div class="c " style="left:1568px;width:125px;">&nbsp;VAT<div class="dd"></div></div>
</div>
<div class="row" style="top:634px;height:26px">
<div class="c " style="left:0px;width:30px;padding:0"><svg class="tr" style="top:3.0px" width="12" height="15" viewBox="0 0 12 15"><path d="M0 1.3H3.8L4.6 0.2H7.4L8.2 1.3H12V3.3H0Z M1 4.2H11V15H1Z" fill="#de2128"/></svg></div>
<div class="c " style="left:30px;width:60px;padding:0"><div class="btn" style="left:1px;top:1px;width:57px;height:21px">Details</div></div>
<div class="c m" style="left:90px;width:45px;">18</div>
<div class="c " style="left:135px;width:150px;"><span>NEW</span></div>
<div class="c " style="left:285px;width:150px;">NEW</div>
<div class="c r" style="left:435px;width:70px;">0.10</div>
<div class="c r" style="left:505px;width:70px;">0.11</div>
<div class="c r" style="left:575px;width:55px;">0</div>
<div class="c r" style="left:630px;width:63px;">0</div>
<div class="c " style="left:693px;width:150px;">N/A<div class="dd"></div></div>
<div class="c " style="left:843px;width:100px;">N/A<div class="dd"></div></div>
<div class="c " style="left:943px;width:125px;">Soup ~!@#$%^...<div class="dd"></div></div>
<div class="c " style="left:1068px;width:125px;">DrinkLabel ~!@...<div class="dd"></div></div>
<div class="c " style="left:1193px;width:125px;">&nbsp;VAT 11.75 ( Rat...<div class="dd"></div></div>
<div class="c " style="left:1318px;width:125px;">&nbsp;VAT 11.75 ( Rat...<div class="dd"></div></div>
<div class="c " style="left:1443px;width:125px;">&nbsp;VAT 11.75 ( Rat...<div class="dd"></div></div>
<div class="c " style="left:1568px;width:125px;">&nbsp;VAT<div class="dd"></div></div>
</div>
<div class="row" style="top:660px;height:26px">
<div class="c " style="left:0px;width:30px;padding:0"><svg class="tr" style="top:3.0px" width="12" height="15" viewBox="0 0 12 15"><path d="M0 1.3H3.8L4.6 0.2H7.4L8.2 1.3H12V3.3H0Z M1 4.2H11V15H1Z" fill="#de2128"/></svg></div>
<div class="c " style="left:30px;width:60px;padding:0"><div class="btn" style="left:1px;top:1px;width:57px;height:21px">Details</div></div>
<div class="c m" style="left:90px;width:45px;">19</div>
<div class="c " style="left:135px;width:150px;"><span>$0</span></div>
<div class="c " style="left:285px;width:150px;">$0</div>
<div class="c r" style="left:435px;width:70px;">0.00</div>
<div class="c r" style="left:505px;width:70px;">0.00</div>
<div class="c r" style="left:575px;width:55px;">0</div>
<div class="c r" style="left:630px;width:63px;">0</div>
<div class="c " style="left:693px;width:150px;">N/A<div class="dd"></div></div>
<div class="c " style="left:843px;width:100px;">N/A<div class="dd"></div></div>
<div class="c " style="left:943px;width:125px;">N/A<div class="dd"></div></div>
<div class="c " style="left:1068px;width:125px;">DrinkLabel ~!@...<div class="dd"></div></div>
<div class="c " style="left:1193px;width:125px;">&nbsp;VAT 11.75 ( Rat...<div class="dd"></div></div>
<div class="c " style="left:1318px;width:125px;">&nbsp;VAT 11.75 ( Rat...<div class="dd"></div></div>
<div class="c " style="left:1443px;width:125px;">&nbsp;VAT 11.75 ( Rat...<div class="dd"></div></div>
<div class="c " style="left:1568px;width:125px;">&nbsp;VAT<div class="dd"></div></div>
</div>
<div class="row" style="top:686px;height:26px">
<div class="c " style="left:0px;width:30px;padding:0"><svg class="tr" style="top:3.0px" width="12" height="15" viewBox="0 0 12 15"><path d="M0 1.3H3.8L4.6 0.2H7.4L8.2 1.3H12V3.3H0Z M1 4.2H11V15H1Z" fill="#de2128"/></svg></div>
<div class="c " style="left:30px;width:60px;padding:0"><div class="btn" style="left:1px;top:1px;width:57px;height:21px">Details</div></div>
<div class="c m" style="left:90px;width:45px;">20</div>
<div class="c " style="left:135px;width:150px;"><span>10.95</span></div>
<div class="c " style="left:285px;width:150px;">10.95</div>
<div class="c r" style="left:435px;width:70px;">10.95</div>
<div class="c r" style="left:505px;width:70px;">12.13</div>
<div class="c r" style="left:575px;width:55px;">0</div>
<div class="c r" style="left:630px;width:63px;">0</div>
<div class="c " style="left:693px;width:150px;">N/A<div class="dd"></div></div>
<div class="c " style="left:843px;width:100px;">N/A<div class="dd"></div></div>
<div class="c " style="left:943px;width:125px;">N/A<div class="dd"></div></div>
<div class="c " style="left:1068px;width:125px;">DrinkLabel ~!@...<div class="dd"></div></div>
<div class="c " style="left:1193px;width:125px;">&nbsp;VAT 11.75 ( Rat...<div class="dd"></div></div>
<div class="c " style="left:1318px;width:125px;">&nbsp;VAT 11.75 ( Rat...<div class="dd"></div></div>
<div class="c " style="left:1443px;width:125px;">&nbsp;VAT 11.75 ( Rat...<div class="dd"></div></div>
<div class="c " style="left:1568px;width:125px;">&nbsp;VAT<div class="dd"></div></div>
</div>
<div class="row" style="top:712px;height:26px">
<div class="c " style="left:0px;width:30px;padding:0"><svg class="tr" style="top:3.0px" width="12" height="15" viewBox="0 0 12 15"><path d="M0 1.3H3.8L4.6 0.2H7.4L8.2 1.3H12V3.3H0Z M1 4.2H11V15H1Z" fill="#de2128"/></svg></div>
<div class="c " style="left:30px;width:60px;padding:0"><div class="btn" style="left:1px;top:1px;width:57px;height:21px">Details</div></div>
<div class="c m" style="left:90px;width:45px;">21</div>
<div class="c " style="left:135px;width:150px;"><span>111</span></div>
<div class="c " style="left:285px;width:150px;"></div>
<div class="c r" style="left:435px;width:70px;">10.00</div>
<div class="c r" style="left:505px;width:70px;">11.08</div>
<div class="c r" style="left:575px;width:55px;">0</div>
<div class="c r" style="left:630px;width:63px;">0</div>
<div class="c " style="left:693px;width:150px;">N/A<div class="dd"></div></div>
<div class="c " style="left:843px;width:100px;">N/A<div class="dd"></div></div>
<div class="c " style="left:943px;width:125px;">Soup ~!@#$%^...<div class="dd"></div></div>
<div class="c " style="left:1068px;width:125px;">DrinkLabel ~!@...<div class="dd"></div></div>
<div class="c " style="left:1193px;width:125px;">&nbsp;VAT 11.75 ( Rat...<div class="dd"></div></div>
<div class="c " style="left:1318px;width:125px;">&nbsp;VAT 11.75 ( Rat...<div class="dd"></div></div>
<div class="c " style="left:1443px;width:125px;">&nbsp;VAT 11.75 ( Rat...<div class="dd"></div></div>
<div class="c " style="left:1568px;width:125px;">&nbsp;VAT<div class="dd"></div></div>
</div>
<div class="row" style="top:738px;height:35px">
<div class="c " style="left:0px;width:30px;padding:0"><svg class="tr" style="top:7.5px" width="12" height="15" viewBox="0 0 12 15"><path d="M0 1.3H3.8L4.6 0.2H7.4L8.2 1.3H12V3.3H0Z M1 4.2H11V15H1Z" fill="#de2128"/></svg></div>
<div class="c " style="left:30px;width:60px;padding:0"><div class="btn" style="left:1px;top:1px;width:57px;height:30px">Details</div></div>
<div class="c m" style="left:90px;width:45px;">22</div>
<div class="c " style="left:135px;width:150px;"><span>QUICK SALE TAX-FULL<br>VAT TAX</span></div>
<div class="c " style="left:285px;width:150px;">QUICK SALE TAX-FULL ...</div>
<div class="c r" style="left:435px;width:70px;">10.55</div>
<div class="c r" style="left:505px;width:70px;">11.69</div>
<div class="c r" style="left:575px;width:55px;">0</div>
<div class="c r" style="left:630px;width:63px;">0</div>
<div class="c " style="left:693px;width:150px;">1.General_Modifier ...<div class="dd"></div></div>
<div class="c " style="left:843px;width:100px;">N/A<div class="dd"></div></div>
<div class="c " style="left:943px;width:125px;">Rolls<div class="dd"></div></div>
<div class="c " style="left:1068px;width:125px;">N/A<div class="dd"></div></div>
<div class="c " style="left:1193px;width:125px;">Sale Tax 8.875...<div class="dd"></div></div>
<div class="c " style="left:1318px;width:125px;">&nbsp;VAT 11.75 ( Rat...<div class="dd"></div></div>
<div class="c " style="left:1443px;width:125px;">Sale Tax 8.875...<div class="dd"></div></div>
<div class="c " style="left:1568px;width:125px;">Sale<div class="dd"></div></div>
</div>
<div class="row" style="top:773px;height:35px">
<div class="c " style="left:0px;width:30px;padding:0"><svg class="tr" style="top:7.5px" width="12" height="15" viewBox="0 0 12 15"><path d="M0 1.3H3.8L4.6 0.2H7.4L8.2 1.3H12V3.3H0Z M1 4.2H11V15H1Z" fill="#de2128"/></svg></div>
<div class="c " style="left:30px;width:60px;padding:0"><div class="btn" style="left:1px;top:1px;width:57px;height:30px">Details</div></div>
<div class="c m" style="left:90px;width:45px;">23</div>
<div class="c " style="left:135px;width:150px;"><span>QUICK VAT TAX-FULL<br>SALE TAX</span></div>
<div class="c " style="left:285px;width:150px;">QUICK VAT TAX-FULL S...</div>
<div class="c r" style="left:435px;width:70px;">10.65</div>
<div class="c r" style="left:505px;width:70px;">11.80</div>
<div class="c r" style="left:575px;width:55px;">0</div>
<div class="c r" style="left:630px;width:63px;">0</div>
<div class="c " style="left:693px;width:150px;">1.General_Modifier ...<div class="dd"></div></div>
<div class="c " style="left:843px;width:100px;">N/A<div class="dd"></div></div>
<div class="c " style="left:943px;width:125px;">Front ~!@#$%^...<div class="dd"></div></div>
<div class="c " style="left:1068px;width:125px;">N/A<div class="dd"></div></div>
<div class="c " style="left:1193px;width:125px;">&nbsp;VAT 11.75 ( Rat...<div class="dd"></div></div>
<div class="c " style="left:1318px;width:125px;">Sale Tax 8.875...<div class="dd"></div></div>
<div class="c " style="left:1443px;width:125px;">&nbsp;VAT 11.75 ( Rat...<div class="dd"></div></div>
<div class="c " style="left:1568px;width:125px;">&nbsp;VAT<div class="dd"></div></div>
</div>
<div class="row" style="top:808px;height:35px">
<div class="c " style="left:0px;width:30px;padding:0"><svg class="tr" style="top:7.5px" width="12" height="15" viewBox="0 0 12 15"><path d="M0 1.3H3.8L4.6 0.2H7.4L8.2 1.3H12V3.3H0Z M1 4.2H11V15H1Z" fill="#de2128"/></svg></div>
<div class="c " style="left:30px;width:60px;padding:0"><div class="btn" style="left:1px;top:1px;width:57px;height:30px">Details</div></div>
<div class="c m" style="left:90px;width:45px;">24</div>
<div class="c " style="left:135px;width:150px;"><span>QUICK NONTAX-FULL<br>VAT TAX</span></div>
<div class="c " style="left:285px;width:150px;">QUICK NONTAX-FULL V...</div>
<div class="c r" style="left:435px;width:70px;">10.75</div>
<div class="c r" style="left:505px;width:70px;">11.91</div>
<div class="c r" style="left:575px;width:55px;">0</div>
<div class="c r" style="left:630px;width:63px;">0</div>
<div class="c " style="left:693px;width:150px;">1.General_Modifier ...<div class="dd"></div></div>
<div class="c " style="left:843px;width:100px;">N/A<div class="dd"></div></div>
<div class="c " style="left:943px;width:125px;">Soup ~!@#$%^...<div class="dd"></div></div>
<div class="c " style="left:1068px;width:125px;">N/A<div class="dd"></div></div>
<div class="c " style="left:1193px;width:125px;">Nontaxable<div class="dd"></div></div>
<div class="c " style="left:1318px;width:125px;">&nbsp;VAT 11.75 ( Rat...<div class="dd"></div></div>
<div class="c " style="left:1443px;width:125px;">Nontaxable<div class="dd"></div></div>
<div class="c " style="left:1568px;width:125px;">Non<div class="dd"></div></div>
</div>
<div class="row" style="top:843px;height:26px">
<div class="c " style="left:0px;width:30px;padding:0"><svg class="tr" style="top:3.0px" width="12" height="15" viewBox="0 0 12 15"><path d="M0 1.3H3.8L4.6 0.2H7.4L8.2 1.3H12V3.3H0Z M1 4.2H11V15H1Z" fill="#de2128"/></svg></div>
<div class="c " style="left:30px;width:60px;padding:0"><div class="btn" style="left:1px;top:1px;width:57px;height:21px">Details</div></div>
<div class="c m" style="left:90px;width:45px;">25</div>
<div class="c " style="left:135px;width:150px;"><span>QUICK NONTAX-FULL</span></div>
<div class="c " style="left:285px;width:150px;">QUICK NONTAX-FULL S...</div>
<div class="c r" style="left:435px;width:70px;">10.85</div>
<div class="c r" style="left:505px;width:70px;">12.02</div>
<div class="c r" style="left:575px;width:55px;">0</div>
<div class="c r" style="left:630px;width:63px;">0</div>
<div class="c " style="left:693px;width:150px;">1.General_Modifier ...<div class="dd"></div></div>
<div class="c " style="left:843px;width:100px;">N/A<div class="dd"></div></div>
<div class="c " style="left:943px;width:125px;">Soup ~!@#$%^...<div class="dd"></div></div>
<div class="c " style="left:1068px;width:125px;">N/A<div class="dd"></div></div>
<div class="c " style="left:1193px;width:125px;">Nontaxable<div class="dd"></div></div>
<div class="c " style="left:1318px;width:125px;">Sale Tax 8.875...<div class="dd"></div></div>
<div class="c " style="left:1443px;width:125px;">Nontaxable<div class="dd"></div></div>
<div class="c " style="left:1568px;width:125px;">Non<div class="dd"></div></div>
</div>
</div>
<div class="abs" style="left:1902px;top:123px;width:16px;height:851px;background:#f0f0f0"><svg class="abs" style="left:3px;top:8px" width="11" height="8" viewBox="0 0 11 8"><path d="M1.5 6.5L5.5 2.5L9.5 6.5" fill="none" stroke="#505050" stroke-width="2"/></svg><div class="abs" style="left:1px;top:18px;width:15px;height:662px;background:#cdcdcd"></div><svg class="abs" style="left:3px;top:838px" width="11" height="8" viewBox="0 0 11 8"><path d="M1.5 1.5L5.5 5.5L9.5 1.5" fill="none" stroke="#505050" stroke-width="2"/></svg></div>
<div class="abs" style="left:305px;top:974px;width:1613px;height:16px;background:#f0f0f0"><svg class="abs" style="left:6px;top:3px" width="8" height="11" viewBox="0 0 8 11"><path d="M6.5 1.5L2.5 5.5L6.5 9.5" fill="none" stroke="#505050" stroke-width="2"/></svg><div class="abs" style="left:18px;top:1px;width:521px;height:15px;background:#cdcdcd"></div><svg class="abs" style="left:1584px;top:3px" width="8" height="11" viewBox="0 0 8 11"><path d="M1.5 1.5L5.5 5.5L1.5 9.5" fill="none" stroke="#505050" stroke-width="2"/></svg></div>
<div class="abs" style="left:305px;top:123px;width:1px;height:916px;background:#cdd6e6"></div>
<div class="abs" style="left:305px;top:990px;width:1613px;height:1px;background:#cfcfcf"></div>
<div class="abs" style="left:1376px;top:203px;width:150px;height:305px;background:#fff;border:1px solid #7c7c7c;border-right-color:#555;border-bottom-color:#555;box-shadow:2px 2px 3px rgba(0,0,0,.5);font-size:11px;color:#111">
<div class="abs" style="left:4px;top:3px;width:13px;height:13px;border:1px solid #333;background:#fff"><svg class="abs" style="left:0;top:0" width="11" height="11" viewBox="0 0 11 11"><path d="M1.5 5.5L4.2 8.5L9.5 2" fill="none" stroke="#4a4a4a" stroke-width="1.15"/></svg></div>
<div class="abs" style="left:22px;top:1px;line-height:14px;white-space:nowrap;color:#111">DrinkLabel ~!@#$%^&amp;*()&quot;</div>
<div class="abs" style="left:4px;top:19px;width:13px;height:13px;border:1px solid #333;background:#fff"><svg class="abs" style="left:0;top:0" width="11" height="11" viewBox="0 0 11 11"><path d="M1.5 5.5L4.2 8.5L9.5 2" fill="none" stroke="#4a4a4a" stroke-width="1.15"/></svg></div>
<div class="abs" style="left:22px;top:17px;line-height:14px;white-space:nowrap;color:#111">Label Printer 1</div>
<div class="abs" style="left:18px;top:34px;width:129px;height:15px;background:#0a74d8;outline:1px dotted #d8e8f8;outline-offset:-1px"></div>
<div class="abs" style="left:4px;top:35px;width:13px;height:13px;border:1px solid #333;background:#fff"><svg class="abs" style="left:0;top:0" width="11" height="11" viewBox="0 0 11 11"><path d="M1.5 5.5L4.2 8.5L9.5 2" fill="none" stroke="#4a4a4a" stroke-width="1.15"/></svg></div>
<div class="abs" style="left:22px;top:33px;line-height:14px;white-space:nowrap;color:#fff">Label Printer 2</div>
<div class="abs" style="left:4px;top:51px;width:13px;height:13px;border:1px solid #333;background:#fff"></div>
<div class="abs" style="left:22px;top:49px;line-height:14px;white-space:nowrap;color:#111">N/A</div>
</div>
<div class="abs" style="left:1373px;top:119px;width:155px;height:153px;border:3px solid #e0202c"></div>
<div class="abs" style="left:320px;top:1001px;width:416px;height:24px;background:#fff;border:1px solid #767676;font-size:14.8px;line-height:23px;padding-left:4px;color:#8a8a8a;white-space:nowrap">Search by Item Description or SKU</div>
<div class="abs" style="left:742px;top:1001px;width:60px;height:26px;background:#dadada;border:1px solid #b4b4b4"><svg class="abs" style="left:21px;top:5px" width="16" height="16" viewBox="0 0 16 16"><circle cx="6.5" cy="6.5" r="4.6" fill="none" stroke="#9a9a9a" stroke-width="1.3"/><path d="M10 10L14.5 14.5" stroke="#9a9a9a" stroke-width="1.8"/></svg></div>
<div class="abs" style="left:1655px;top:998px;width:44px;height:34px;background:#d6d6d6;border:1px solid #c2c2c2"><svg class="abs" style="left:15px;top:8px" width="12" height="17" viewBox="0 0 12 17"><path d="M9.5 1.5L2.5 8.5L9.5 15.5" fill="none" stroke="#9a9a9a" stroke-width="1.6"/></svg></div>
<div class="abs" style="left:1854px;top:998px;width:44px;height:34px;background:#d6d6d6;border:1px solid #c2c2c2"><svg class="abs" style="left:16px;top:8px" width="12" height="17" viewBox="0 0 12 17"><path d="M2.5 1.5L9.5 8.5L2.5 15.5" fill="none" stroke="#9a9a9a" stroke-width="1.6"/></svg></div>
<div class="abs" style="left:1725px;top:1010px;font-size:12.3px;color:#222">Page</div>
<div class="abs" style="left:1761px;top:1005px;width:40px;height:21px;background:#fff;border:1px solid #767676;font-size:12.3px;line-height:21px;padding-left:3px">1</div>
<div class="abs" style="left:1807px;top:1010px;font-size:12.3px;color:#222">of 1</div>
<div class="abs" style="left:0;top:1039px;width:1918px;height:2px;background:#2a2a2a"></div>
</div></body></html>
